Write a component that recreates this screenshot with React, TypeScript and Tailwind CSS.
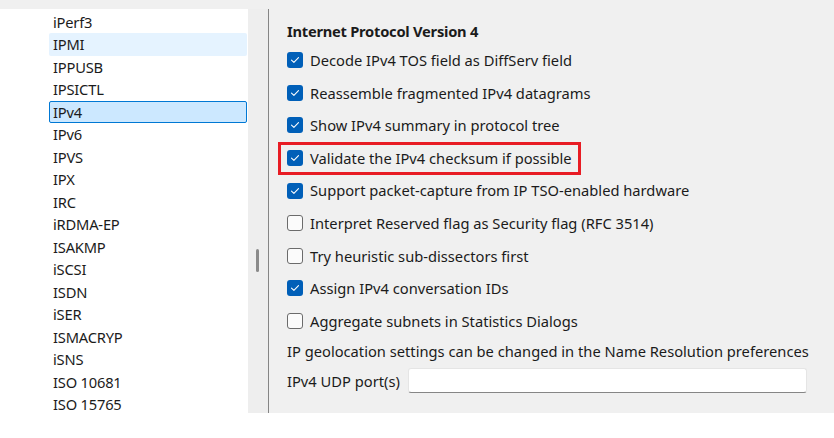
import React from 'react';

const protocols = [
  'iPerf3',
  'IPMI',
  'IPPUSB',
  'IPSICTL',
  'IPv4',
  'IPv6',
  'IPVS',
  'IPX',
  'IRC',
  'iRDMA-EP',
  'ISAKMP',
  'iSCSI',
  'ISDN',
  'iSER',
  'ISMACRYP',
  'iSNS',
  'ISO 10681',
  'ISO 15765',
];

const options = [
  { label: 'Decode IPv4 TOS field as DiffServ field', checked: true },
  { label: 'Reassemble fragmented IPv4 datagrams', checked: true },
  { label: 'Show IPv4 summary in protocol tree', checked: true },
  { label: 'Validate the IPv4 checksum if possible', checked: true, marked: true },
  { label: 'Support packet-capture from IP TSO-enabled hardware', checked: true },
  { label: 'Interpret Reserved flag as Security flag (RFC 3514)', checked: false },
  { label: 'Try heuristic sub-dissectors first', checked: false },
  { label: 'Assign IPv4 conversation IDs', checked: true },
  { label: 'Aggregate subnets in Statistics Dialogs', checked: false },
];

const CheckBox: React.FC<{ checked: boolean }> = ({ checked }) =>
  checked ? (
    <span className="w-4 h-4 rounded-[3px] bg-[#005fb8] flex items-center justify-center shrink-0">
      <svg width="10" height="8" viewBox="0 0 10 8" fill="none">
        <path d="M1.5 4.2 L3.9 6.3 L8.5 1.7" stroke="white" strokeWidth="1.1" strokeLinecap="round" strokeLinejoin="round" />
      </svg>
    </span>
  ) : (
    <span className="w-4 h-4 rounded-[3px] bg-[#fbfbfb] border border-[#6b6b6b] shrink-0" />
  );

export default function App() {
  return (
    <div
      className="w-[834px] h-[438px] bg-white flex flex-col text-[14.7px] text-[#1b1b1b] overflow-hidden"
      style={{ fontFamily: '"Noto Sans", "Open Sans", sans-serif' }}
    >
      <div className="h-[9px] bg-[#f0f0f0] shrink-0" />
      <div className="flex h-[404px] shrink-0">
        {/* protocol list */}
        <div className="w-[248px] shrink-0 bg-white pt-[1.5px] pl-[49px] pr-px">
          {protocols.map((p) => (
            <div
              key={p}
              className={
                'h-[22.5px] flex items-center rounded-[2px] tracking-[-0.2px] ' +
                (p === 'IPMI'
                  ? 'bg-[#e5f3ff] pl-[4px]'
                  : p === 'IPv4'
                  ? 'bg-[#cce8ff] border border-[#0078d4] pl-[3px]'
                  : 'pl-[4px]')
              }
            >
              {p}
            </div>
          ))}
        </div>
        {/* splitter / scroll track */}
        <div className="w-[20px] shrink-0 bg-[#eeeeee] relative">
          <div className="absolute left-[8px] top-[240px] w-[3px] h-[23px] rounded-full bg-[#8a8a8a]" />
        </div>
        <div className="w-px shrink-0 bg-[#858585]" />
        {/* preferences */}
        <div className="flex-1 min-w-0 bg-[#f0f0f0] pl-[18px] pr-[27px] pt-[11px]">
          <div className="h-[22px] leading-[22px] font-bold tracking-[-0.25px]">Internet Protocol Version 4</div>
          <div className="h-[1.7px]" />
          {options.map((o) => (
            <div key={o.label} className="h-[32.625px] flex items-center gap-[7px] relative">
              <CheckBox checked={o.checked} />
              <span className="whitespace-nowrap">{o.label}</span>
              {o.marked && (
                <div className="absolute left-[-9px] top-0 w-[303px] h-[33px] border-[3px] border-[#e81c24]" />
              )}
            </div>
          ))}
          <div className="h-[27px] flex items-center whitespace-nowrap">
            IP geolocation settings can be changed in the Name Resolution preferences
          </div>
          <div className="h-[33px] flex items-center gap-[8px]">
            <span className="whitespace-nowrap">IPv4 UDP port(s)</span>
            <div className="flex-1 h-[25px] bg-white border border-[#e5e5e5] border-b-[#868686] rounded-[3px]" />
          </div>
        </div>
      </div>
      <div className="flex-1 bg-white" />
    </div>
  );
}
